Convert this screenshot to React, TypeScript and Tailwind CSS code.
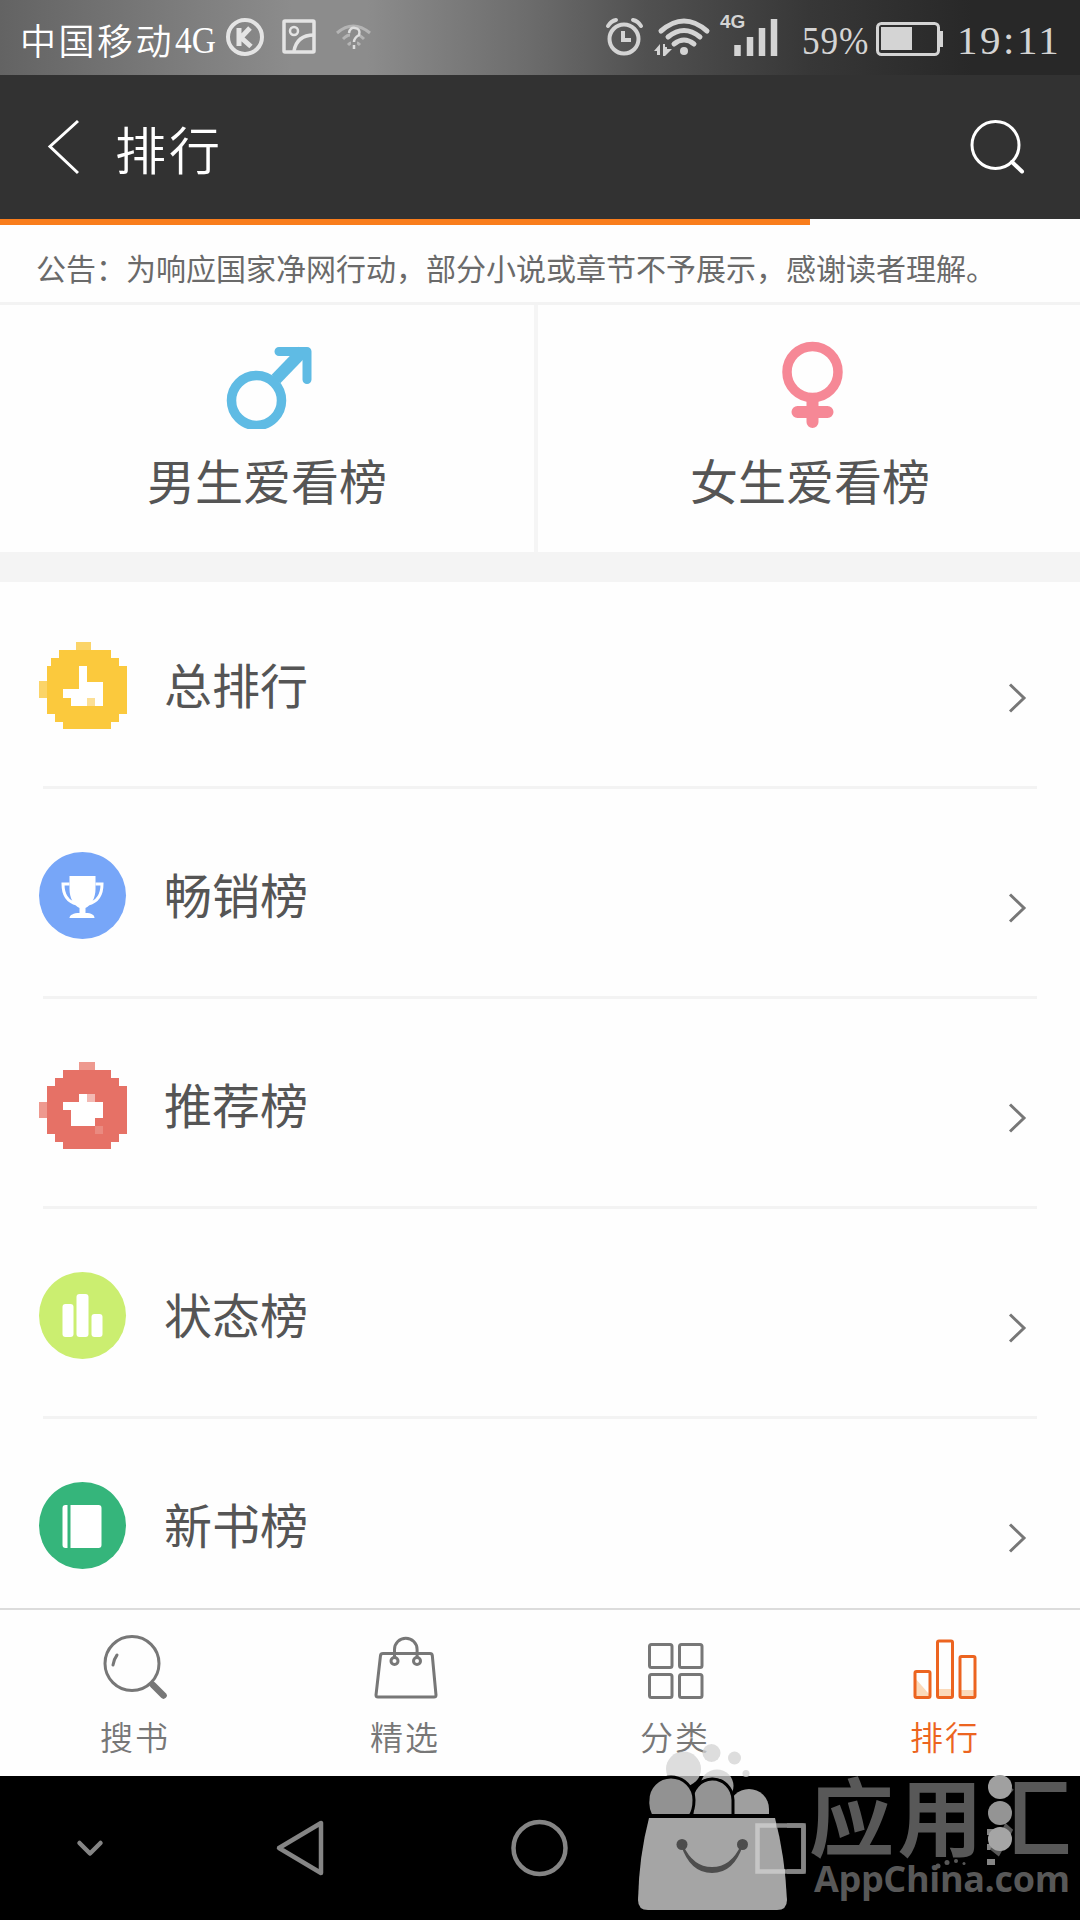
import type { ReactNode } from 'react';
import clsx from 'clsx';

const rankings: { title: string; icon: ReactNode }[] = [
  {
    title: '总排行',
    icon: (
      <svg viewBox="0 0 88 88" className="size-[88px]" shapeRendering="crispEdges">
        <path fill="#fbd468" d="M37 0h15v8h-15zM0 39h8v17h-8z" />
        <path fill="#fbc93d" d="M20 8h52v8h8v8h8v48h-8v8h-8v7H24v-7h-8v-8H8V24h4v-8h8z" />
        <path fill="#fff" d="M40 24h8v16h16v24H32v-8h-8v-9h16z" />
        <path fill="#fcdf95" d="M48 56h8v8h-8z" />
      </svg>
    ),
  },
  {
    title: '畅销榜',
    icon: (
      <svg viewBox="0.5 0 88 88" className="size-[88px]" fill="none">
        <circle cx="44" cy="43.500" r="43.500" fill="#77a6f8" />
        <path fill="#fff" d="M31 24h26v13c0 9-4 16-10 19v5c6 0 9 2 9 5H31c0-3 4-5 10-5v-5c-6-3-10-10-10-19z" />
        <path stroke="#fff" strokeWidth="3" d="M31 32h-6.500c0 11 5 18 14 20M57 32h6.500c0 11-5 18-14 20" />
      </svg>
    ),
  },
  {
    title: '推荐榜',
    icon: (
      <svg viewBox="0 0 88 88" className="size-[88px]" shapeRendering="crispEdges">
        <path fill="#ee998f" d="M40 0h16v8H40zM0 40h8v16H0z" />
        <path fill="#e67166" d="M24 8h48v8h8v8h8v48h-8v8h-8v7H24v-7h-8v-8H8V24h8v-8h8z" />
        <path fill="#fff" d="M40 32h8v8h16v16h-8v8H32V48h-8v-8h16z" />
        <path fill="#f3b9b3" d="M48 32h8v8h-8z" />
        <path fill="#ea8a80" d="M56 64h8v8h-8z" />
      </svg>
    ),
  },
  {
    title: '状态榜',
    icon: (
      <svg viewBox="0.5 0 88 88" className="size-[88px]">
        <circle cx="44" cy="43.500" r="43.500" fill="#cbee70" />
        <rect x="24" y="32" width="11" height="33" rx="3" fill="#fff" />
        <rect x="38" y="22" width="12" height="43" rx="3" fill="#fff" />
        <rect x="53" y="42" width="11" height="23" rx="3" fill="#fff" />
      </svg>
    ),
  },
  {
    title: '新书榜',
    icon: (
      <svg viewBox="0.5 0 88 88" className="size-[88px]">
        <circle cx="44" cy="43.500" r="43.500" fill="#35b57b" />
        <path fill="#fff" d="M27 23h2v43h-2a3 3 0 0 1-3-3V26a3 3 0 0 1 3-3zM32 23h28a3 3 0 0 1 3 3v37a3 3 0 0 1-3 3H32z" />
      </svg>
    ),
  },
];

const tabs: { label: string; active?: boolean; icon: ReactNode }[] = [
  {
    label: '搜书',
    icon: (
      <>
        <circle cx="30" cy="29.500" r="27" />
        <path d="M15 21q-3 4-4 10" />
        <path d="M51 51l10.500 10.500" strokeWidth="6.500" />
      </>
    ),
  },
  {
    label: '精选',
    icon: (
      <>
        <path d="M11 19.500h47q2 0 2.300 2L64 61q0 2-2 2H6q-2 0-2-2l4.500-39.500q.3-2 2.500-2z" />
        <path d="M22.500 23V15.500a11.300 11.300 0 0 1 22.600 0V23" />
        <circle cx="22.500" cy="27" r="3.500" />
        <circle cx="45" cy="27" r="3.500" />
      </>
    ),
  },
  {
    label: '分类',
    icon: (
      <>
        <rect x="7.500" y="10.500" width="22.500" height="23" rx="2" />
        <rect x="37.500" y="10.500" width="22.500" height="23" rx="2" />
        <rect x="7.500" y="40.500" width="22.500" height="23" rx="2" />
        <rect x="37.500" y="40.500" width="22.500" height="23" rx="2" />
      </>
    ),
  },
  {
    label: '排行',
    active: true,
    icon: (
      <>
        <path fill="#fbd9b9" stroke="none" d="M3 44l14 16v3H3zM26 55h14v8H26zM48 56h14v7H48z" />
        <rect x="3" y="37.500" width="15" height="26" rx="1.500" />
        <rect x="25.500" y="7" width="15" height="56.500" rx="1.500" />
        <rect x="48" y="22.500" width="15" height="41" rx="1.500" />
      </>
    ),
  },
];

const StatusBar = () => (
  <div className="flex h-[75px] items-center bg-[linear-gradient(90deg,#636363_0%,#8c8c8c_27%,#8c8c8c_34%,#6c6c6c_49%,#505050_60%,#373737_75%,#282828_90%,#282828_100%)] text-white">
    <span className="ml-[20px] mt-0.5 w-[155px] whitespace-nowrap text-[36px] font-[350] tracking-[2.500px]">中国移动</span>
    <span className="mt-1.5 w-[46px] origin-left scale-x-[.88] whitespace-nowrap font-['Liberation_Serif',serif] text-[38px]">4G</span>
    <svg viewBox="0 0 150 40" className="-mt-px h-10 w-[150px]" fill="none" stroke="#e4e4e4" strokeWidth="4">
      <circle cx="24" cy="20" r="17" />
      <path d="M18 11v18M29 11l-9 9.500 10 9" strokeWidth="5" />
      <rect x="63" y="4" width="30" height="31" rx="1" strokeWidth="3.500" />
      <circle cx="73" cy="14" r="4" strokeWidth="2.500" />
      <path d="M73 34c2-11 9-16 20-16" strokeWidth="3.500" />
      <g stroke="#b4b4b4" strokeWidth="3">
        <path d="M116 16q16-14 33 0M122 22q4-4 7-4M143 22q-3-3-5-4M127 28q2-2 3-2M139 28q-2-2-3-2" />
        <path d="M128 16q1-6 6-5 6 1 4 7-5 3-5 7M133 28v4" stroke="#dedede" strokeWidth="2.500" />
      </g>
    </svg>
    <svg viewBox="600 0 180 75" className="ml-[229px] h-[75px] w-[180px]" fill="none" stroke="#d4d4d4">
      <circle cx="624" cy="39" r="14.500" strokeWidth="4" />
      <path d="M623 31v9h8" strokeWidth="4" />
      <path d="M608 26q3-5 8-6M633 20q5 1 8 6" strokeWidth="4" strokeLinecap="round" />
      <path d="M661 31q23-20 46 0M668 37q16-13 32 0M674 44q10-8 20 0" strokeWidth="5" strokeLinecap="round" />
      <circle cx="684" cy="51" r="4" fill="#d4d4d4" stroke="none" />
      <path d="M654 51l6-7v11h-3v-4zM663 44h2v3h2v2h5l-7 7h-2z" fill="#d4d4d4" stroke="none" />
      <text x="720" y="28" fill="#d4d4d4" stroke="none" className="font-['Liberation_Sans',sans-serif] text-[19px] font-bold">
        4G
      </text>
      <path d="M737.500 56V45M750 56V37M762 56V28M774 56V19" strokeWidth="6.500" />
    </svg>
    <span className="ml-[22px] mt-1.5 w-[74px] origin-left scale-x-[.86] whitespace-nowrap font-['Liberation_Serif',serif] text-[41px] tracking-[1px] text-[#d4d4d4]">
      59%
    </span>
    <svg viewBox="0 0 68 34" className="mt-0.5 h-[34px] w-[68px]" fill="none" stroke="#d4d4d4">
      <rect x="1.500" y="1.500" width="61" height="31" rx="4" strokeWidth="3" />
      <path d="M5 5h31v23H5zM63 9h4v16h-4z" fill="#d4d4d4" stroke="none" />
    </svg>
    <span className="ml-[13px] mt-1.5 whitespace-nowrap font-['Liberation_Serif',serif] text-[41px] tracking-[2.500px] text-[#d4d4d4]">19:11</span>
  </div>
);

const Header = () => (
  <header className="flex h-36 items-center bg-[#323232] text-white">
    <svg viewBox="0 0 32 56" className="ml-[47px] h-14 w-8" fill="none" stroke="currentColor" strokeWidth="3">
      <path d="M31 2L3 27.500 31 54" />
    </svg>
    <h1 className="ml-[36px] mt-0.5 text-[51px] font-[350] tracking-[3px]">排行</h1>
    <svg viewBox="0 0 56 56" className="ml-auto mr-[55px] h-14 w-14" fill="none" stroke="currentColor" strokeWidth="3">
      <circle cx="26.500" cy="26" r="23.500" />
      <path d="M43 43l10 9.500" strokeWidth="4" strokeLinecap="round" />
    </svg>
  </header>
);

const GenderTabs = () => (
  <div className="flex h-[247px]">
    <div className="flex w-[538px] flex-col items-center border-r-4 border-[#f5f5f5] pt-[34px]">
      <svg viewBox="0 0 90 90" className="ml-0.5 size-[90px]" fill="none" stroke="#5fbbe4" strokeLinecap="round" strokeLinejoin="round">
        <circle cx="33.500" cy="61.500" r="25" strokeWidth="9.500" />
        <path d="M53 40l27-28" strokeWidth="12" strokeLinecap="butt" />
        <path d="M56 12.500h28v28" strokeWidth="9" />
      </svg>
      <h2 className="mt-[14px] text-[48px] leading-[72px]">男生爱看榜</h2>
    </div>
    <div className="flex flex-1 flex-col items-center pt-[34px]">
      <svg viewBox="0 0 90 90" className="ml-1.5 size-[90px]" fill="none" stroke="#f68896" strokeLinecap="round">
        <circle cx="45.500" cy="33" r="25.500" strokeWidth="9.500" />
        <path d="M45.500 62v21M30.500 73h30" strokeWidth="12" />
      </svg>
      <h2 className="ml-0.5 mt-[14px] text-[48px] leading-[72px]">女生爱看榜</h2>
    </div>
  </div>
);

const RankingList = () => (
  <ul className="h-[1026px] overflow-hidden">
    {rankings.map((item) => (
      <li key={item.title} className="mb-[3px] h-[207px]">
        <div className="flex h-[204px] items-center pl-[39px] pr-[53px] pt-1">
          {item.icon}
          <span className="-mt-1.5 ml-[37px] text-[48px]">{item.title}</span>
          <svg viewBox="0 0 20 32" className="ml-auto mt-[24px] h-8 w-5" fill="none" stroke="#777" strokeWidth="3">
            <path d="M3 2.500L17 16 3 29.500" />
          </svg>
        </div>
        <div className="mx-[43px] h-[3px] bg-[#f3f3f3]" />
      </li>
    ))}
  </ul>
);

const TabBar = () => (
  <nav className="flex h-[168px] border-t-2 border-[#dcdcdc]">
    {tabs.map((tab) => (
      <div key={tab.label} className={clsx('flex flex-1 flex-col items-center pt-6', tab.active ? 'text-[#ec6420]' : 'text-[#777]')}>
        <svg viewBox="0 0 66 66" className="size-[66px]" fill="none" stroke="currentColor" strokeWidth="3" strokeLinecap="round">
          {tab.icon}
        </svg>
        <span className="mt-[11px] text-[33px] font-[350] leading-[50px] tracking-[2px]">{tab.label}</span>
      </div>
    ))}
  </nav>
);

const SystemNav = () => (
  <div className="h-36 bg-black">
    <svg viewBox="0 0 1080 144" className="h-36 w-full" fill="none" stroke="#858585" strokeWidth="4.500" strokeLinejoin="round" strokeLinecap="round">
      <path d="M79.500 67l10.500 10.500 10.500-10.500" />
      <path d="M321 47v50l-42-25z" />
      <circle cx="539.500" cy="72" r="26" />
      <rect x="757.500" y="49.500" width="46" height="46" rx="1" />
      <path d="M990 56h2M990 71h2M990 86h2" strokeWidth="6" strokeLinecap="square" />
    </svg>
  </div>
);

// App store stamp laid over the lower right corner
const StoreStamp = () => (
  <svg viewBox="620 1740 460 180" className="absolute bottom-0 right-0 h-[180px] w-[460px]">
    <g fill="#d2d2d2" fillOpacity=".75">
      <circle cx="711.500" cy="1753" r="9" />
      <circle cx="734.500" cy="1758" r="6.500" />
      <circle cx="746" cy="1773.500" r="3.500" />
      <circle cx="683.500" cy="1769" r="17.500" />
      <circle cx="717" cy="1786" r="16.500" />
    </g>
    <path fill="#9f9f9f" d="M729 1815v-6a20 20 0 0 1 40 0v6z" />
    <path fill="#949494" stroke="#000" strokeWidth="3" d="M692 1816v-15a20 21 0 0 1 41-1v16z" />
    <path fill="#929292" stroke="#000" strokeWidth="3" d="M651 1816q-4-8-3-16a23 23 0 0 1 46 0q0 10-4 16z" />
    <path fill="#000" d="M646 1814h126v4H646z" />
    <path fill="#a5a5a5" d="M649 1818h126q10 38 12 82 0 10-10 10H648q-10 0-10-10 1-44 11-82z" />
    <path d="M776 1825.500h-18.500v46H785" fill="none" stroke="#c6c6c6" strokeWidth="4.500" />
    <circle cx="682" cy="1844.500" r="5.500" fill="#4d4d4d" />
    <circle cx="742.500" cy="1844.500" r="5.500" fill="#4d4d4d" />
    <path fill="#4d4d4d" d="M681 1845q9 28 31 28t31-28h-2q-10 22-29 22t-29-22z" />
    <path d="M787 1825.500h16.500v46H787" fill="none" stroke="#858585" strokeWidth="4.500" />
    <text x="809" y="1850" textLength="262" fill="#585858" className="font-['Noto_Sans_CJK_SC',sans-serif] text-[85px] font-bold">
      应用汇
    </text>
    <circle cx="1000" cy="1787" r="12" fill="#a0a0a0" />
    <circle cx="1000" cy="1813" r="12" fill="#949494" />
    <circle cx="1000" cy="1839" r="12" fill="#a5a5a5" />
    <g fill="#585858">
      <circle cx="938" cy="1866" r="2.500" />
      <circle cx="947" cy="1862.500" r="2.500" />
      <circle cx="956" cy="1861" r="2" />
      <circle cx="964" cy="1863.500" r="1.500" />
    </g>
    <text x="814" y="1892" textLength="256" fill="#585858" className="font-['Open_Sans',sans-serif] text-[36px] font-bold">
      AppChina.com
    </text>
  </svg>
);

export default function App() {
  return (
    <div className="relative h-[1920px] w-[1080px] overflow-hidden bg-[#fefefe] font-['Noto_Sans_CJK_SC',sans-serif] text-[#555]">
      <StatusBar />
      <Header />
      <div className="h-1.5">
        <div className="h-full w-[810px] bg-[#f97d1c]" />
      </div>
      <p className="flex h-20 items-center whitespace-nowrap border-b-[3px] border-[#f3f3f3] pb-[3px] pl-[36px] pt-[10px] text-[30px] text-[#6a6a6a]">
        公告：为响应国家净网行动，部分小说或章节不予展示，感谢读者理解。
      </p>
      <GenderTabs />
      <div className="h-[30px] bg-[#f4f4f4]" />
      <RankingList />
      <TabBar />
      <SystemNav />
      <StoreStamp />
    </div>
  );
}
